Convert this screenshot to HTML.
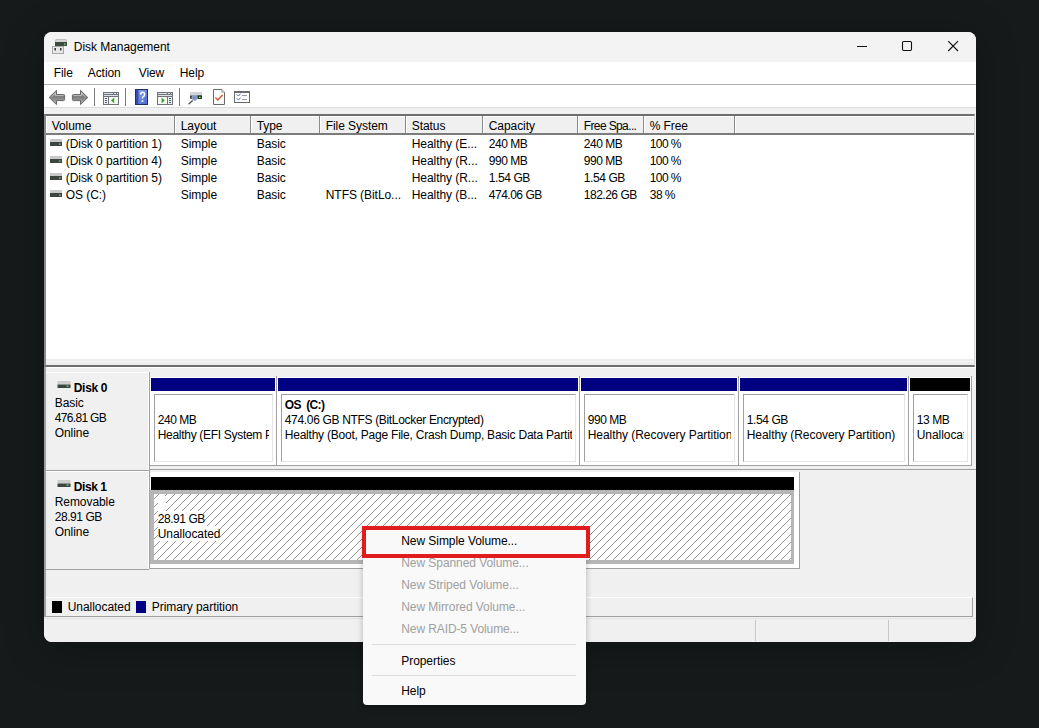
<!DOCTYPE html>
<html><head><meta charset="utf-8">
<style>
*{margin:0;padding:0;box-sizing:border-box}
html,body{width:1039px;height:728px;overflow:hidden;background:#161a1b;font-family:"Liberation Sans",sans-serif;font-size:12px;color:#000}
.a{position:absolute}
.t{position:absolute;white-space:nowrap;line-height:20px;height:20px}
#win{left:44px;top:32px;width:932px;height:610px;background:#f0f0f0;border-radius:8px;overflow:hidden;box-shadow:0 6px 40px rgba(0,0,0,0.25)}
#in{left:-44px;top:-32px;width:1039px;height:728px}
svg{position:absolute;overflow:visible}
</style></head><body>

<div id="win" class="a"><div id="in" class="a">
<div class="a" style="left:44px;top:32px;width:932px;height:30px;background:#f3f3f3"></div>
<div class="t" style="left:73.75px;top:37px;font-size:12px;color:#000;letter-spacing:-0.037px;">Disk Management</div>
<svg style="left:0;top:0" width="1039" height="728">
<rect x="55.5" y="39.5" width="11" height="3" rx="1" fill="#d4d4d4" stroke="#bdbdbd" stroke-width="1"/>
<rect x="55" y="42" width="12" height="4" fill="#3d4a40"/>
<rect x="64" y="43.5" width="1.5" height="1.2" fill="#8fd08f"/>
<rect x="52.5" y="46.5" width="11" height="7" fill="#e8e8e8" stroke="#a8a8a8" stroke-width="1"/>
<rect x="54.5" y="48" width="1.5" height="2.5" fill="#333"/>
<rect x="60" y="48" width="1.5" height="2.5" fill="#333"/>
</svg>
<svg style="left:0;top:0" width="1039" height="728">
<rect x="857" y="46" width="10" height="1" fill="#111"/>
<rect x="902.5" y="41.5" width="9" height="9" rx="1.2" fill="none" stroke="#111" stroke-width="1.1"/>
<path d="M948.2 41.2 L958 51 M958 41.2 L948.2 51" stroke="#111" stroke-width="1.15"/>
</svg>
<div class="a" style="left:44px;top:62px;width:932px;height:23px;background:#fff;border-bottom:1px solid #b2b2b2"></div>
<div class="t" style="left:53.75px;top:63px;font-size:12px;color:#000;letter-spacing:-0.064px;">File</div>
<div class="t" style="left:87.75px;top:63px;font-size:12px;color:#000;letter-spacing:-0.067px;">Action</div>
<div class="t" style="left:138.75px;top:63px;font-size:12px;color:#000;letter-spacing:-0.086px;">View</div>
<div class="t" style="left:179.75px;top:63px;font-size:12px;color:#000;letter-spacing:-0.082px;">Help</div>
<div class="a" style="left:44px;top:85px;width:932px;height:22px;background:#fff"></div>
<svg style="left:0;top:0" width="1039" height="728">
<defs>
<linearGradient id="ag" x1="0" y1="0" x2="0" y2="1"><stop offset="0" stop-color="#c4c4c4"/><stop offset="0.45" stop-color="#7c7c7c"/><stop offset="1" stop-color="#b4b4b4"/></linearGradient>
<linearGradient id="hb" x1="0" y1="0" x2="1" y2="1"><stop offset="0" stop-color="#8aa4ec"/><stop offset="1" stop-color="#4b6cd0"/></linearGradient>
</defs>
<path d="M49.2 97.5 L56.5 90.3 L56.5 94.5 L63.5 94.5 Q64.6 94.5 64.6 95.6 L64.6 99.5 Q64.6 100.6 63.5 100.6 L56.5 100.6 L56.5 104.6 Z" fill="url(#ag)" stroke="#5e5e5e" stroke-width="0.9"/>
<path d="M51 97.5 L55.5 93 L55.5 95.5 L63.5 95.5" fill="none" stroke="#d8d8d8" stroke-width="0.6"/>
<path d="M87.8 97.5 L80.5 90.3 L80.5 94.5 L73.5 94.5 Q72.4 94.5 72.4 95.6 L72.4 99.5 Q72.4 100.6 73.5 100.6 L80.5 100.6 L80.5 104.6 Z" fill="url(#ag)" stroke="#5e5e5e" stroke-width="0.9"/>
<path d="M86 97.5 L81.5 93 L81.5 95.5 L73.5 95.5" fill="none" stroke="#d8d8d8" stroke-width="0.6"/>
<rect x="94" y="88" width="1" height="18" fill="#7a7a7a"/>
<g shape-rendering="crispEdges">
<!-- window icon 1 -->
<rect x="103" y="92" width="16" height="13" fill="#6e747a"/>
<rect x="104" y="93" width="9" height="1" fill="#dde1e4"/>
<rect x="114" y="93" width="2" height="1" fill="#e8eaec"/><rect x="117" y="93" width="1" height="1" fill="#e8eaec"/>
<rect x="104" y="95" width="14" height="1" fill="#dfe3e6"/>
<rect x="104" y="97" width="4" height="7" fill="#e9eff5"/>
<rect x="105" y="98" width="2" height="1" fill="#555b61"/><rect x="105" y="100" width="2" height="1" fill="#555b61"/><rect x="105" y="102" width="2" height="1" fill="#555b61"/>
<rect x="109" y="97" width="9" height="7" fill="#f3faf0"/>
<!-- window icon 2 -->
<rect x="157" y="92" width="16" height="13" fill="#6e747a"/>
<rect x="158" y="93" width="9" height="1" fill="#dde1e4"/>
<rect x="168" y="93" width="2" height="1" fill="#e8eaec"/><rect x="171" y="93" width="1" height="1" fill="#e8eaec"/>
<rect x="158" y="95" width="14" height="1" fill="#dfe3e6"/>
<rect x="158" y="97" width="9" height="7" fill="#f3faf0"/>
<rect x="168" y="97" width="4" height="7" fill="#e9eff5"/>
<rect x="169" y="98" width="2" height="1" fill="#555b61"/><rect x="169" y="100" width="2" height="1" fill="#555b61"/><rect x="169" y="102" width="2" height="1" fill="#555b61"/>
<rect x="125" y="88" width="1" height="18" fill="#7a7a7a"/>
<rect x="179" y="88" width="1" height="18" fill="#7a7a7a"/>
</g>
<path d="M111 100.5 L114.2 97.6 L114.2 103.2 Z" fill="#3f9b35"/>
<path d="M164.8 100.5 L161.6 97.6 L161.6 103.2 Z" fill="#3f9b35"/>
<!-- help book -->
<rect x="135" y="89" width="13" height="16" fill="#1f2d72"/>
<rect x="136" y="90" width="11" height="14" fill="url(#hb)"/>
<rect x="136" y="90" width="2.5" height="14" fill="#3550b0"/>
<path d="M140.6 94.6 Q140.8 92.3 142.6 92.3 Q144.6 92.3 144.6 94.4 Q144.6 95.8 143.2 96.6 Q142.4 97.2 142.4 98.6" fill="none" stroke="#fff" stroke-width="1.5"/>
<rect x="141.6" y="100.2" width="1.7" height="1.7" fill="#fff"/>
<!-- disk magnifier -->
<rect x="190" y="92" width="12" height="3.5" fill="#d4d4d4"/>
<rect x="190" y="95.5" width="12" height="3.3" fill="#3d3d3d"/>
<rect x="197.7" y="95.5" width="4.2" height="3.3" fill="#0f3d12"/>
<rect x="199" y="96.8" width="1.6" height="1.2" fill="#9cf09c"/>
<circle cx="194.6" cy="97.8" r="2.7" fill="#7e92c8" stroke="#a8b4c8" stroke-width="0.8"/>
<line x1="192.6" y1="100.4" x2="188.6" y2="104.3" stroke="#555" stroke-width="1.4"/>
<!-- doc check -->
<path d="M213.5 89.5 L221.8 89.5 L224.5 92.2 L224.5 104.5 L213.5 104.5 Z" fill="#fff" stroke="#6a6a6a" stroke-width="1"/>
<path d="M221.8 89.5 L221.8 92.2 L224.5 92.2" fill="#e8e8e8" stroke="#8a8a8a" stroke-width="0.8"/>
<path d="M215.4 97.4 L217.9 100 L222.6 95.1" fill="none" stroke="#d4582c" stroke-width="1.5"/>
<!-- checklist -->
<rect x="234.5" y="91.5" width="15" height="11" fill="#fff" stroke="#6a6a6a" stroke-width="1"/>
<rect x="235" y="92" width="14" height="1" fill="#6a6a6a"/>
<path d="M236.8 94.4 L238.4 96 L240.6 93.6 M236.8 98.4 L238.4 100 L240.6 97.6" fill="none" stroke="#3a6cc8" stroke-width="1"/>
<path d="M242 95.5h5M242 99.5h5" stroke="#9a9a9a" stroke-width="1"/>
</svg>

<div class="a" style="left:44px;top:107px;width:932px;height:8px;background:#f0f0f0;border-top:1px solid #dcdcdc"></div>
<div class="a" style="left:44px;top:114px;width:931px;height:253px;background:#fff;border-left:2px solid #8a8a8a;border-right:1px solid #d4d4d4;border-top:2px solid #6e6e6e;border-bottom:2px solid #6e6e6e"></div>
<div class="a" style="left:46px;top:359px;width:928px;height:6px;background:#ececec;border-top:2px solid #ececec"></div>
<div class="a" style="left:46px;top:361px;width:928px;height:1px;background:#fafafa"></div>
<div class="a" style="left:46px;top:116px;width:928px;height:18px;background:#f0f0f0;border-top:1px solid #fff;border-left:1px solid #fff"></div>
<div class="a" style="left:46px;top:133px;width:928px;height:2px;background:#7c7c7c"></div>
<div class="a" style="left:174px;top:116px;width:1px;height:17px;background:#8a8a8a"></div>
<div class="a" style="left:175px;top:116px;width:1px;height:17px;background:#fff"></div>
<div class="a" style="left:250px;top:116px;width:1px;height:17px;background:#8a8a8a"></div>
<div class="a" style="left:251px;top:116px;width:1px;height:17px;background:#fff"></div>
<div class="a" style="left:319px;top:116px;width:1px;height:17px;background:#8a8a8a"></div>
<div class="a" style="left:320px;top:116px;width:1px;height:17px;background:#fff"></div>
<div class="a" style="left:405px;top:116px;width:1px;height:17px;background:#8a8a8a"></div>
<div class="a" style="left:406px;top:116px;width:1px;height:17px;background:#fff"></div>
<div class="a" style="left:482px;top:116px;width:1px;height:17px;background:#8a8a8a"></div>
<div class="a" style="left:483px;top:116px;width:1px;height:17px;background:#fff"></div>
<div class="a" style="left:577px;top:116px;width:1px;height:17px;background:#8a8a8a"></div>
<div class="a" style="left:578px;top:116px;width:1px;height:17px;background:#fff"></div>
<div class="a" style="left:643px;top:116px;width:1px;height:17px;background:#8a8a8a"></div>
<div class="a" style="left:644px;top:116px;width:1px;height:17px;background:#fff"></div>
<div class="a" style="left:734px;top:116px;width:1px;height:17px;background:#8a8a8a"></div>
<div class="a" style="left:735px;top:116px;width:1px;height:17px;background:#fff"></div>
<div class="t" style="left:51.75px;top:116px;font-size:12px;color:#000;letter-spacing:-0.080px;">Volume</div>
<div class="t" style="left:180.75px;top:116px;font-size:12px;color:#000;letter-spacing:-0.072px;">Layout</div>
<div class="t" style="left:256.75px;top:116px;font-size:12px;color:#000;letter-spacing:-0.087px;">Type</div>
<div class="t" style="left:325.75px;top:116px;font-size:12px;color:#000;letter-spacing:-0.063px;">File System</div>
<div class="t" style="left:411.75px;top:116px;font-size:12px;color:#000;letter-spacing:-0.068px;">Status</div>
<div class="t" style="left:488.75px;top:116px;font-size:12px;color:#000;letter-spacing:-0.067px;">Capacity</div>
<div class="t" style="left:583.75px;top:116px;font-size:12px;color:#000;letter-spacing:-0.616px;">Free Spa...</div>
<div class="t" style="left:649.75px;top:116px;font-size:12px;color:#000;letter-spacing:-0.077px;">% Free</div>
<svg style="left:0;top:0" width="1039" height="728">
<rect x="50" y="139" width="12" height="3" fill="#c9c9c9"/>
<rect x="50" y="142" width="12" height="4" fill="#3d4541"/>
<rect x="59" y="143.5" width="1.6" height="1.2" fill="#7ee07e"/>
</svg>
<div class="t" style="left:65.75px;top:134px;font-size:12px;color:#000;letter-spacing:-0.062px;">(Disk 0 partition 1)</div>
<div class="t" style="left:180.75px;top:134px;font-size:12px;color:#000;letter-spacing:-0.073px;">Simple</div>
<div class="t" style="left:256.75px;top:134px;font-size:12px;color:#000;letter-spacing:-0.073px;">Basic</div>
<div class="t" style="left:411.75px;top:134px;font-size:12px;color:#000;letter-spacing:-0.055px;">Healthy (E...</div>
<div class="t" style="left:488.75px;top:134px;font-size:12px;color:#000;letter-spacing:-0.481px;">240 MB</div>
<div class="t" style="left:583.75px;top:134px;font-size:12px;color:#000;letter-spacing:-0.481px;">240 MB</div>
<div class="t" style="left:649.75px;top:134px;font-size:12px;color:#000;letter-spacing:-0.583px;">100 %</div>
<svg style="left:0;top:0" width="1039" height="728">
<rect x="50" y="156" width="12" height="3" fill="#c9c9c9"/>
<rect x="50" y="159" width="12" height="4" fill="#3d4541"/>
<rect x="59" y="160.5" width="1.6" height="1.2" fill="#7ee07e"/>
</svg>
<div class="t" style="left:65.75px;top:151px;font-size:12px;color:#000;letter-spacing:-0.062px;">(Disk 0 partition 4)</div>
<div class="t" style="left:180.75px;top:151px;font-size:12px;color:#000;letter-spacing:-0.073px;">Simple</div>
<div class="t" style="left:256.75px;top:151px;font-size:12px;color:#000;letter-spacing:-0.073px;">Basic</div>
<div class="t" style="left:411.75px;top:151px;font-size:12px;color:#000;letter-spacing:-0.056px;">Healthy (R...</div>
<div class="t" style="left:488.75px;top:151px;font-size:12px;color:#000;letter-spacing:-0.481px;">990 MB</div>
<div class="t" style="left:583.75px;top:151px;font-size:12px;color:#000;letter-spacing:-0.481px;">990 MB</div>
<div class="t" style="left:649.75px;top:151px;font-size:12px;color:#000;letter-spacing:-0.583px;">100 %</div>
<svg style="left:0;top:0" width="1039" height="728">
<rect x="50" y="173" width="12" height="3" fill="#c9c9c9"/>
<rect x="50" y="176" width="12" height="4" fill="#3d4541"/>
<rect x="59" y="177.5" width="1.6" height="1.2" fill="#7ee07e"/>
</svg>
<div class="t" style="left:65.75px;top:168px;font-size:12px;color:#000;letter-spacing:-0.062px;">(Disk 0 partition 5)</div>
<div class="t" style="left:180.75px;top:168px;font-size:12px;color:#000;letter-spacing:-0.073px;">Simple</div>
<div class="t" style="left:256.75px;top:168px;font-size:12px;color:#000;letter-spacing:-0.073px;">Basic</div>
<div class="t" style="left:411.75px;top:168px;font-size:12px;color:#000;letter-spacing:-0.056px;">Healthy (R...</div>
<div class="t" style="left:488.75px;top:168px;font-size:12px;color:#000;letter-spacing:-0.405px;">1.54 GB</div>
<div class="t" style="left:583.75px;top:168px;font-size:12px;color:#000;letter-spacing:-0.405px;">1.54 GB</div>
<div class="t" style="left:649.75px;top:168px;font-size:12px;color:#000;letter-spacing:-0.583px;">100 %</div>
<svg style="left:0;top:0" width="1039" height="728">
<rect x="50" y="190" width="12" height="3" fill="#c9c9c9"/>
<rect x="50" y="193" width="12" height="4" fill="#3d4541"/>
<rect x="59" y="194.5" width="1.6" height="1.2" fill="#7ee07e"/>
</svg>
<div class="t" style="left:65.75px;top:185px;font-size:12px;color:#000;letter-spacing:-0.068px;">OS (C:)</div>
<div class="t" style="left:180.75px;top:185px;font-size:12px;color:#000;letter-spacing:-0.073px;">Simple</div>
<div class="t" style="left:256.75px;top:185px;font-size:12px;color:#000;letter-spacing:-0.073px;">Basic</div>
<div class="t" style="left:325.75px;top:185px;font-size:12px;color:#000;letter-spacing:-0.058px;">NTFS (BitLo...</div>
<div class="t" style="left:411.75px;top:185px;font-size:12px;color:#000;letter-spacing:-0.055px;">Healthy (B...</div>
<div class="t" style="left:488.75px;top:185px;font-size:12px;color:#000;letter-spacing:-0.486px;">474.06 GB</div>
<div class="t" style="left:583.75px;top:185px;font-size:12px;color:#000;letter-spacing:-0.486px;">182.26 GB</div>
<div class="t" style="left:649.75px;top:185px;font-size:12px;color:#000;letter-spacing:-0.533px;">38 %</div>
<div class="a" style="left:44px;top:367px;width:932px;height:250px;background:#f0f0f0;border-top:1px solid #fff"></div>
<div class="a" style="left:46px;top:372px;width:103px;height:99px;background:#f0f0f0;border-top:1px solid #fff;border-right:1px solid #fff"></div>
<div class="a" style="left:149px;top:372px;width:1px;height:99px;background:#a0a0a0"></div>
<div class="a" style="left:46px;top:470px;width:103px;height:1px;background:#a0a0a0"></div>
<svg style="left:0;top:0" width="1039" height="728">
<rect x="57.5" y="381" width="13" height="3.5" fill="#cdcdcd"/>
<rect x="57.5" y="384.5" width="13" height="3.5" fill="#3d4541"/>
<rect x="66.5" y="385.5" width="2" height="1.2" fill="#6ee07e"/>
</svg>
<div class="t" style="left:73.75px;top:378px;font-size:12px;color:#000;letter-spacing:-0.312px;font-weight:bold;">Disk 0</div>
<div class="t" style="left:54.75px;top:393px;font-size:12px;color:#000;letter-spacing:-0.073px;">Basic</div>
<div class="t" style="left:54.75px;top:408px;font-size:12px;color:#000;letter-spacing:-0.672px;">476.81 GB</div>
<div class="t" style="left:54.75px;top:423px;font-size:12px;color:#000;letter-spacing:-0.069px;">Online</div>
<div class="a" style="left:150px;top:377px;width:821px;height:88px;background:#fff"></div>
<div class="a" style="left:150px;top:465px;width:822px;height:1px;background:#a0a0a0"></div>
<div class="a" style="left:150px;top:469px;width:826px;height:1px;background:#a0a0a0"></div>
<div class="a" style="left:971px;top:376px;width:1px;height:90px;background:#a0a0a0"></div>
<div class="a" style="left:151px;top:378px;width:124px;height:13px;background:#000080"></div>
<div class="a" style="left:154px;top:394px;width:119px;height:68px;border-left:1px solid #a0a0a0;border-top:1px solid #a0a0a0;border-right:1px solid #e6e6e6;border-bottom:1px solid #e6e6e6"></div>
<div class="a" style="left:155px;top:395px;width:114px;height:66px;overflow:hidden"><div class="a" style="left:-155px;top:-395px;width:1039px;height:728px">
<div class="t" style="left:157.75px;top:410px;font-size:12px;color:#000;letter-spacing:-0.481px;">240 MB</div>
<div class="t" style="left:157.75px;top:425px;font-size:12px;color:#000;letter-spacing:-0.301px;">Healthy (EFI System Partition)</div>
</div></div>
<div class="a" style="left:276px;top:376px;width:1px;height:90px;background:#a0a0a0"></div>
<div class="a" style="left:278px;top:378px;width:300px;height:13px;background:#000080"></div>
<div class="a" style="left:281px;top:394px;width:295px;height:68px;border-left:1px solid #a0a0a0;border-top:1px solid #a0a0a0;border-right:1px solid #e6e6e6;border-bottom:1px solid #e6e6e6"></div>
<div class="a" style="left:282px;top:395px;width:290px;height:66px;overflow:hidden"><div class="a" style="left:-282px;top:-395px;width:1039px;height:728px">
<div class="t" style="left:284.75px;top:395px;font-size:12px;color:#000;letter-spacing:-0.637px;font-weight:bold;">OS&nbsp; (C:)</div>
<div class="t" style="left:284.75px;top:410px;font-size:12px;color:#000;letter-spacing:-0.330px;">474.06 GB NTFS (BitLocker Encrypted)</div>
<div class="t" style="left:284.75px;top:425px;font-size:12px;color:#000;letter-spacing:-0.221px;">Healthy (Boot, Page File, Crash Dump, Basic Data Partition)</div>
</div></div>
<div class="a" style="left:579px;top:376px;width:1px;height:90px;background:#a0a0a0"></div>
<div class="a" style="left:581px;top:378px;width:156px;height:13px;background:#000080"></div>
<div class="a" style="left:584px;top:394px;width:151px;height:68px;border-left:1px solid #a0a0a0;border-top:1px solid #a0a0a0;border-right:1px solid #e6e6e6;border-bottom:1px solid #e6e6e6"></div>
<div class="a" style="left:585px;top:395px;width:146px;height:66px;overflow:hidden"><div class="a" style="left:-585px;top:-395px;width:1039px;height:728px">
<div class="t" style="left:587.75px;top:410px;font-size:12px;color:#000;letter-spacing:-0.481px;">990 MB</div>
<div class="t" style="left:587.75px;top:425px;font-size:12px;color:#000;letter-spacing:-0.056px;">Healthy (Recovery Partition)</div>
</div></div>
<div class="a" style="left:738px;top:376px;width:1px;height:90px;background:#a0a0a0"></div>
<div class="a" style="left:740px;top:378px;width:167px;height:13px;background:#000080"></div>
<div class="a" style="left:743px;top:394px;width:162px;height:68px;border-left:1px solid #a0a0a0;border-top:1px solid #a0a0a0;border-right:1px solid #e6e6e6;border-bottom:1px solid #e6e6e6"></div>
<div class="a" style="left:744px;top:395px;width:157px;height:66px;overflow:hidden"><div class="a" style="left:-744px;top:-395px;width:1039px;height:728px">
<div class="t" style="left:746.75px;top:410px;font-size:12px;color:#000;letter-spacing:-0.405px;">1.54 GB</div>
<div class="t" style="left:746.75px;top:425px;font-size:12px;color:#000;letter-spacing:-0.056px;">Healthy (Recovery Partition)</div>
</div></div>
<div class="a" style="left:908px;top:376px;width:1px;height:90px;background:#a0a0a0"></div>
<div class="a" style="left:910px;top:378px;width:60px;height:13px;background:#000000"></div>
<div class="a" style="left:913px;top:394px;width:55px;height:68px;border-left:1px solid #a0a0a0;border-top:1px solid #a0a0a0;border-right:1px solid #e6e6e6;border-bottom:1px solid #e6e6e6"></div>
<div class="a" style="left:914px;top:395px;width:50px;height:66px;overflow:hidden"><div class="a" style="left:-914px;top:-395px;width:1039px;height:728px">
<div class="t" style="left:916.75px;top:410px;font-size:12px;color:#000;letter-spacing:-0.418px;">13 MB</div>
<div class="t" style="left:916.75px;top:425px;font-size:12px;color:#000;letter-spacing:-0.063px;">Unallocated</div>
</div></div>
<div class="a" style="left:46px;top:471px;width:103px;height:98px;background:#f0f0f0;border-top:1px solid #fff;border-right:1px solid #fff"></div>
<div class="a" style="left:149px;top:471px;width:1px;height:98px;background:#a0a0a0"></div>
<div class="a" style="left:46px;top:569px;width:103px;height:1px;background:#a0a0a0"></div>
<svg style="left:0;top:0" width="1039" height="728">
<rect x="57.5" y="480" width="13" height="3.5" fill="#cdcdcd"/>
<rect x="57.5" y="483.5" width="13" height="3.5" fill="#3d4541"/>
<rect x="66.5" y="484.5" width="2" height="1.2" fill="#6ee07e"/>
</svg>
<div class="t" style="left:73.75px;top:477px;font-size:12px;color:#000;letter-spacing:-0.432px;font-weight:bold;">Disk 1</div>
<div class="t" style="left:54.75px;top:492px;font-size:12px;color:#000;letter-spacing:-0.076px;">Removable</div>
<div class="t" style="left:54.75px;top:507px;font-size:12px;color:#000;letter-spacing:-0.451px;">28.91 GB</div>
<div class="t" style="left:54.75px;top:522px;font-size:12px;color:#000;letter-spacing:-0.069px;">Online</div>
<div class="a" style="left:150px;top:472px;width:650px;height:97px;background:#fff;border-right:1px solid #a0a0a0;border-bottom:1px solid #a0a0a0"></div>
<div class="a" style="left:151px;top:477px;width:643px;height:13px;background:#000"></div>
<div class="a" style="left:150px;top:490px;width:644px;height:74px;background:#b6b6b6"></div>
<svg style="left:0;top:0" width="1039" height="728">
<defs><pattern id="hp" patternUnits="userSpaceOnUse" x="0" y="0" width="8" height="8">
<rect x="0" y="4" width="1" height="1" fill="#989898"/><rect x="1" y="3" width="1" height="1" fill="#989898"/>
<rect x="2" y="2" width="1" height="1" fill="#989898"/><rect x="3" y="1" width="1" height="1" fill="#989898"/>
<rect x="4" y="0" width="1" height="1" fill="#989898"/><rect x="5" y="7" width="1" height="1" fill="#989898"/>
<rect x="6" y="6" width="1" height="1" fill="#989898"/><rect x="7" y="5" width="1" height="1" fill="#989898"/>
</pattern></defs>
<rect x="154" y="494" width="637" height="66" fill="#fff"/>
<rect x="154" y="494" width="637" height="66" fill="url(#hp)" shape-rendering="crispEdges"/>
<rect x="158" y="496" width="8" height="15" fill="#fff"/>
<rect x="158" y="511" width="45" height="15" fill="#fff"/>
<rect x="158" y="526" width="62" height="15" fill="#fff"/>
</svg>
<div class="t" style="left:157.75px;top:509px;font-size:12px;color:#000;letter-spacing:-0.451px;">28.91 GB</div>
<div class="t" style="left:157.75px;top:524px;font-size:12px;color:#000;letter-spacing:-0.063px;">Unallocated</div>
<div class="a" style="left:46px;top:597px;width:927px;height:20px;background:#f0f0f0;border-top:1px solid #fff;border-right:1px solid #a0a0a0;border-bottom:1px solid #a0a0a0"></div>
<div class="a" style="left:52px;top:601px;width:10px;height:12px;background:#000"></div>
<div class="t" style="left:67.75px;top:597px;font-size:12px;color:#000;letter-spacing:-0.048px;">Unallocated</div>
<div class="a" style="left:136px;top:601px;width:10px;height:12px;background:#000080"></div>
<div class="t" style="left:151.75px;top:597px;font-size:12px;color:#000;letter-spacing:-0.055px;">Primary partition</div>
<div class="a" style="left:44px;top:367px;width:2px;height:250px;background:#a0a0a0"></div>
<div class="a" style="left:44px;top:618px;width:932px;height:24px;background:#f0f0f0;border-top:1px solid #e4e4e4"></div>
<div class="a" style="left:755px;top:620px;width:1px;height:21px;background:#c8c8c8"></div>
<div class="a" style="left:888px;top:620px;width:1px;height:21px;background:#c8c8c8"></div>
</div></div>
<div class="a" style="left:363px;top:527px;width:223px;height:178px;background:#f9f9f9;border-radius:0 0 4px 4px;box-shadow:0 2px 6px rgba(0,0,0,0.25)"></div>
<div class="t" style="left:401.25px;top:531px;font-size:12px;color:#000;letter-spacing:-0.062px;">New Simple Volume...</div>
<div class="t" style="left:401.25px;top:553px;font-size:12px;color:#a0a0a0;letter-spacing:-0.064px;">New Spanned Volume...</div>
<div class="t" style="left:401.25px;top:575px;font-size:12px;color:#a0a0a0;letter-spacing:-0.059px;">New Striped Volume...</div>
<div class="t" style="left:401.25px;top:597px;font-size:12px;color:#a0a0a0;letter-spacing:-0.060px;">New Mirrored Volume...</div>
<div class="t" style="left:401.25px;top:619px;font-size:12px;color:#a0a0a0;letter-spacing:-0.098px;">New RAID-5 Volume...</div>
<div class="t" style="left:401.25px;top:651px;font-size:12px;color:#000;letter-spacing:-0.061px;">Properties</div>
<div class="t" style="left:401.25px;top:681px;font-size:12px;color:#000;letter-spacing:-0.082px;">Help</div>
<div class="a" style="left:372px;top:644px;width:204px;height:1px;background:#dcdcdc"></div>
<div class="a" style="left:372px;top:675px;width:204px;height:1px;background:#dcdcdc"></div>
<div class="a" style="left:362px;top:526px;width:228px;height:32px;border:4px solid #e01c1c"></div>
</body></html>
